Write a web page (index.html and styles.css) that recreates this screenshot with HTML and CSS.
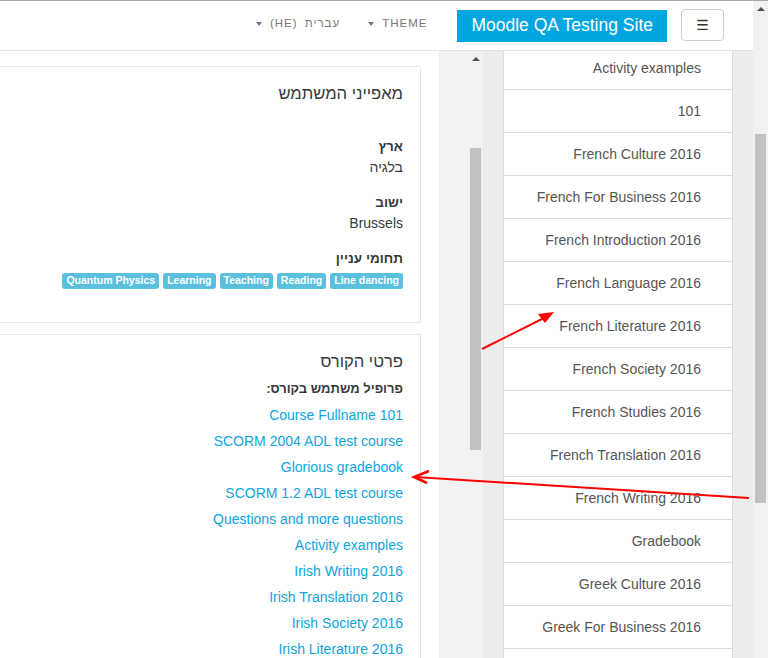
FILE: index.html
```html
<!DOCTYPE html>
<html lang="he" dir="rtl">
<head>
    <meta charset="UTF-8">
    <meta name="viewport" content="width=768, initial-scale=1.0">
    <title>פרופיל: Moodle QA Testing Site</title>
    <link rel="stylesheet" href="styles.css">
</head>
<body>
    <div class="shell">
        <div class="page">
            <!-- Barra superior -->
            <nav class="navbar">
                <button class="nav-toggle">☰</button>
                <a class="brand" href="#">Moodle QA Testing Site</a>
                <span class="nav-menu">Theme</span>
                <span class="nav-menu lang">עברית (HE)</span>
            </nav>

            <div class="page-body">
                <!-- Menu lateral de cursos -->
                <aside class="drawer">
                    <ul class="drawer-list">
                        <li>Activity examples</li>
                        <li>101</li>
                        <li>French Culture 2016</li>
                        <li>French For Business 2016</li>
                        <li>French Introduction 2016</li>
                        <li>French Language 2016</li>
                        <li>French Literature 2016</li>
                        <li>French Society 2016</li>
                        <li>French Studies 2016</li>
                        <li>French Translation 2016</li>
                        <li>French Writing 2016</li>
                        <li>Gradebook</li>
                        <li>Greek Culture 2016</li>
                        <li>Greek For Business 2016</li>
                        <li>&nbsp;</li>
                    </ul>
                </aside>
                <div class="scrollbar drawer-scroll">
                    <span class="scroll-up"></span>
                    <span class="thumb"></span>
                </div>
                <div class="gutter"></div>

                <!-- Conteúdo principal -->
                <main class="content">
                    <section class="card">
                        <h3>מאפייני המשתמש</h3>
                        <dl class="profile">
                            <dt>ארץ</dt>
                            <dd>בלגיה</dd>
                            <dt>ישוב</dt>
                            <dd>Brussels</dd>
                            <dt>תחומי עניין</dt>
                            <dd class="tags">
                                <span class="badge">Line dancing</span>
                                <span class="badge">Reading</span>
                                <span class="badge">Teaching</span>
                                <span class="badge">Learning</span>
                                <span class="badge">Quantum Physics</span>
                            </dd>
                        </dl>
                    </section>

                    <section class="card">
                        <h3>פרטי הקורס</h3>
                        <div class="label">פרופיל משתמש בקורס:</div>
                        <ul class="course-links">
                            <li><a href="#">Course Fullname 101</a></li>
                            <li><a href="#">SCORM 2004 ADL test course</a></li>
                            <li><a href="#">Glorious gradebook</a></li>
                            <li><a href="#">SCORM 1.2 ADL test course</a></li>
                            <li><a href="#">Questions and more questions</a></li>
                            <li><a href="#">Activity examples</a></li>
                            <li><a href="#">Irish Writing 2016</a></li>
                            <li><a href="#">Irish Translation 2016</a></li>
                            <li><a href="#">Irish Society 2016</a></li>
                            <li><a href="#">Irish Literature 2016</a></li>
                        </ul>
                    </section>
                </main>
            </div>
        </div>

        <div class="scrollbar page-scroll">
            <span class="scroll-up"></span>
            <span class="thumb"></span>
        </div>
    </div>

    <!-- Setas de anotação -->
    <svg class="annotations" width="768" height="658" viewBox="0 0 768 658">
        <line x1="482" y1="349" x2="550" y2="315" stroke="#ff0000" stroke-width="2"/>
        <polygon points="554,312 538,314 545,323" fill="#ff0000"/>
        <line x1="749" y1="498" x2="415" y2="477" stroke="#ff0000" stroke-width="2"/>
        <polyline points="429,471 414,477 427,483" fill="none" stroke="#ff0000" stroke-width="2.5"/>
    </svg>
</body>
</html>
```

FILE: styles.css
```css
body {
    margin: 0;
    width: 768px;
    height: 658px;
    overflow: hidden;
    position: relative;
    font-family: "Liberation Sans", Arial, sans-serif;
    font-size: 14px;
    color: #373a3c;
    background-color: #fff;
}

.shell {
    direction: ltr;
    display: flex;
    height: 657px;
    border-top: 1px solid #a8a8a8;
}

.page {
    direction: rtl;
    width: 753px;
    display: flex;
    flex-direction: column;
}

/* Barra superior */
.navbar {
    height: 49px;
    flex-shrink: 0;
    border-bottom: 1px solid #e3e3e3;
    display: flex;
    align-items: center;
    padding-right: 29px;
    background-color: #fff;
}

.nav-toggle {
    width: 43px;
    height: 32px;
    margin-top: -2px;
    border: 1px solid #ccc;
    border-radius: 4px;
    background-color: #fff;
    color: #333;
    font-size: 14px;
    font-family: "DejaVu Sans", sans-serif;
    padding: 0;
}

.brand {
    margin-right: 14px;
    height: 32px;
    padding: 0 14px;
    display: flex;
    align-items: center;
    background-color: #00a6e0;
    color: #fff;
    font-size: 17.5px;
    text-decoration: none;
}

.nav-menu {
    align-self: flex-start;
    margin-top: 14px;
    margin-right: 30px;
    font-size: 11.5px;
    line-height: 16px;
    letter-spacing: 1px;
    text-transform: uppercase;
    color: #777;
}

.nav-menu.lang {
    margin-right: 28px;
    word-spacing: 3px;
}

.nav-menu::after {
    content: "";
    display: inline-block;
    vertical-align: middle;
    margin-right: 8px;
    border-top: 4px solid #777;
    border-left: 3px solid transparent;
    border-right: 3px solid transparent;
}

/* Corpo da página */
.page-body {
    flex: 1;
    display: flex;
    min-height: 0;
}

.drawer {
    width: 270px;
    flex-shrink: 0;
    background-color: #ebeced;
    overflow: hidden;
}

.drawer-list {
    list-style: none;
    margin: -4px 20px 0;
    padding: 0;
    background-color: #fff;
    border-left: 1px solid #ddd;
    border-right: 1px solid #ddd;
}

.drawer-list li {
    padding: 11px 31px 11px 10px;
    line-height: 20px;
    color: #555;
    border-bottom: 1px solid #ddd;
}

.gutter {
    width: 29px;
    flex-shrink: 0;
    background-color: #f2f2f2;
}

/* Barras de rolagem */
.scrollbar {
    width: 15px;
    flex-shrink: 0;
    background-color: #f1f1f1;
    display: flex;
    flex-direction: column;
    align-items: center;
}

.scroll-up {
    width: 15px;
    height: 15px;
    display: flex;
    align-items: center;
    justify-content: center;
}

.scroll-up::before {
    content: "";
    border-bottom: 4px solid #505050;
    border-left: 4px solid transparent;
    border-right: 4px solid transparent;
}

.thumb {
    width: 11px;
    background-color: #c1c1c1;
}

.drawer-scroll .thumb {
    margin-top: 82px;
    height: 302px;
}

.page-scroll .thumb {
    margin-top: 118px;
    height: 369px;
}

/* Conteúdo principal */
.content {
    flex: 1;
    overflow: hidden;
    background-color: #fff;
}

.card {
    margin: 15px 18px 0 -120px;
    border: 1px solid #e6e6e6;
    padding: 16px 17px 33px;
    background-color: #fff;
}

.card + .card {
    margin-top: 11px;
}

h3 {
    margin: 0;
    font-size: 16.6px;
    line-height: 21px;
    font-weight: normal;
}

.profile {
    margin: 33px 0 0;
}

.profile dt {
    font-weight: bold;
    font-size: 13.5px;
    line-height: 20px;
}

.profile dd {
    margin: 0 0 15px;
    line-height: 21px;
}

.profile dd.tags {
    margin-bottom: 0;
    padding-top: 4px;
    display: flex;
    gap: 4px;
    line-height: normal;
}

.badge {
    display: inline-block;
    background-color: #5bc0de;
    color: #fff;
    font-size: 10.5px;
    font-weight: bold;
    line-height: 11px;
    padding: 2px 4px 3px;
    border-radius: 3px;
}

.label {
    margin-top: 7px;
    font-size: 13px;
    font-weight: bold;
    line-height: 20px;
    margin-bottom: 3px;
}

.course-links {
    list-style: none;
    margin: 0;
    padding: 0;
}

.course-links li {
    line-height: 26px;
}

.course-links a {
    color: #10a4dd;
    text-decoration: none;
}

/* Setas */
.annotations {
    position: absolute;
    top: 0;
    left: 0;
    pointer-events: none;
}
```
